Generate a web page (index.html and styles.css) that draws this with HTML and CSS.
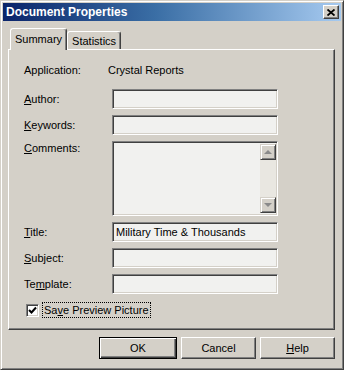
FILE: index.html
```html
<!DOCTYPE html>
<html lang="en">
<head>
    <meta charset="utf-8">
    <title>Document Properties</title>
    <link rel="stylesheet" href="styles.css">
</head>
<body>
    <div class="window">
        <div class="titlebar">
            <span class="title">Document Properties</span>
            <span class="close">
                <svg width="8" height="7" viewBox="0 0 8 7"><path d="M0.5 0.5 L7.5 6.5 M7.5 0.5 L0.5 6.5" stroke="#000" stroke-width="1.8"/></svg>
            </span>
        </div>
        <div class="dialog">
            <div class="tabs">
                <div class="tab active">Summary</div>
                <div class="tab">Statistics</div>
            </div>
            <div class="panel">
                <div class="row info">
                    <span class="label">Application:</span>
                    <span class="value">Crystal Reports</span>
                </div>
                <div class="row">
                    <span class="label"><u>A</u>uthor:</span>
                    <div class="field"></div>
                </div>
                <div class="row">
                    <span class="label"><u>K</u>eywords:</span>
                    <div class="field"></div>
                </div>
                <div class="row top">
                    <span class="label"><u>C</u>omments:</span>
                    <div class="field area">
                        <div class="scrollbar">
                            <div class="arrow"><span class="tri up"></span></div>
                            <div class="track"></div>
                            <div class="arrow"><span class="tri down"></span></div>
                        </div>
                    </div>
                </div>
                <div class="row">
                    <span class="label"><u>T</u>itle:</span>
                    <div class="field">Military Time &amp; Thousands</div>
                </div>
                <div class="row">
                    <span class="label"><u>S</u>ubject:</span>
                    <div class="field"></div>
                </div>
                <div class="row">
                    <span class="label">Te<u>m</u>plate:</span>
                    <div class="field"></div>
                </div>
                <div class="check-row">
                    <span class="checkbox">
                        <svg width="9" height="9" viewBox="0 0 9 9"><path d="M1 4 L3.5 6.5 L8 1.5" fill="none" stroke="#000" stroke-width="2"/></svg>
                    </span>
                    <span class="check-label">Sa<u>v</u>e Preview Picture</span>
                </div>
            </div>
            <div class="buttons">
                <button class="btn default">OK</button>
                <button class="btn">Cancel</button>
                <button class="btn"><u>H</u>elp</button>
            </div>
        </div>
    </div>
</body>
</html>
```

FILE: styles.css
```css
body{
    margin: 0;
    font-family: "Liberation Sans", Arial, sans-serif;
    font-size: 11px;
    color: #000;
}
.window{
    width: 344px;
    height: 370px;
    box-sizing: border-box;
    background-color: #d4d0c8;
    border: 1px solid;
    border-color: #d4d0c8 #404040 #404040 #d4d0c8;
    box-shadow: inset 1px 1px 0 #fff, inset -1px -1px 0 #808080;
    padding: 2px;
}
.titlebar{
    height: 18px;
    display: flex;
    align-items: center;
    justify-content: space-between;
    background: linear-gradient(to right, #0a246a 0%, #3a6ea5 45%, #a6caf0 100%);
    padding: 0 2px 0 3px;
}
.title{
    color: white;
    font-weight: bold;
    font-size: 12px;
}
.close{
    width: 16px;
    height: 14px;
    box-sizing: border-box;
    background-color: #d4d0c8;
    border: 1px solid;
    border-color: #fff #404040 #404040 #fff;
    box-shadow: inset -1px -1px 0 #808080;
    display: flex;
    align-items: center;
    justify-content: center;
}
.dialog{
    padding: 7px 6px 0 5px;
}
.tabs{
    height: 21px;
    display: flex;
    align-items: flex-end;
    padding-left: 2px;
}
.tab{
    height: 18px;
    box-sizing: border-box;
    padding: 0 4px;
    display: flex;
    align-items: center;
    border: 1px solid;
    border-bottom: none;
    border-color: #fff #404040 #404040 #fff;
    border-radius: 3px 3px 0 0;
    box-shadow: inset -1px 0 0 #808080;
}
.tab.active{
    height: 22px;
    margin-bottom: -1px;
    padding: 0 4px 2px 4px;
    position: relative;
    z-index: 1;
    background-color: #d4d0c8;
}
.panel{
    height: 281px;
    box-sizing: border-box;
    border: 1px solid;
    border-color: #fff #404040 #404040 #fff;
    box-shadow: inset -1px -1px 0 #808080;
    padding: 13px 0 0 15px;
    display: flex;
    flex-direction: column;
    gap: 6px;
}
.row{
    display: flex;
    align-items: center;
}
.row.info{
    height: 14px;
    margin-bottom: 6px;
}
.row.top{
    align-items: flex-start;
}
.row.top .label{
    padding-top: 1px;
}
.label{
    width: 88px;
}
.value{
    margin-left: -4px;
}
.field{
    width: 166px;
    height: 20px;
    box-sizing: border-box;
    background-color: #f1f1ef;
    border: 1px solid;
    border-color: #808080 #fff #fff #808080;
    box-shadow: inset 1px 1px 0 #404040, inset -1px -1px 0 #d4d0c8;
    padding: 0 3px;
    display: flex;
    align-items: center;
}
.field.area{
    height: 75px;
    padding: 2px 1px 2px 2px;
    justify-content: flex-end;
    align-items: stretch;
}
.scrollbar{
    width: 16px;
    display: flex;
    flex-direction: column;
    background-color: #e9e7e1;
}
.track{
    flex: 1;
}
.arrow{
    height: 16px;
    box-sizing: border-box;
    background-color: #d4d0c8;
    border: 1px solid;
    border-color: #d4d0c8 #404040 #404040 #d4d0c8;
    box-shadow: inset 1px 1px 0 #fff, inset -1px -1px 0 #808080;
    display: flex;
    align-items: center;
    justify-content: center;
}
.tri{
    width: 0;
    height: 0;
    border-left: 4px solid transparent;
    border-right: 4px solid transparent;
}
.tri.up{
    border-bottom: 4px solid #8a8a8a;
}
.tri.down{
    border-top: 4px solid #8a8a8a;
}
.check-row{
    display: flex;
    align-items: center;
    gap: 4px;
    margin-top: 3px;
    padding-left: 2px;
}
.checkbox{
    width: 13px;
    height: 13px;
    box-sizing: border-box;
    background-color: #fff;
    border: 1px solid;
    border-color: #808080 #fff #fff #808080;
    box-shadow: inset 1px 1px 0 #404040, inset -1px -1px 0 #d4d0c8;
    display: flex;
    align-items: center;
    justify-content: center;
}
.check-label{
    outline: 1px dotted #000;
    padding: 1px 1px;
}
.buttons{
    display: flex;
    justify-content: flex-end;
    gap: 4px;
    margin-top: 7px;
}
.btn{
    width: 75px;
    height: 22px;
    font-family: "Liberation Sans", Arial, sans-serif;
    font-size: 11px;
    color: #000;
    background-color: #d4d0c8;
    border: 1px solid;
    border-color: #fff #404040 #404040 #fff;
    box-shadow: inset -1px -1px 0 #808080;
    padding: 0;
}
.btn.default{
    width: 78px;
    border-color: #000;
    box-shadow: inset 1px 1px 0 #fff, inset -1px -1px 0 #404040, inset -2px -2px 0 #808080;
}
```
